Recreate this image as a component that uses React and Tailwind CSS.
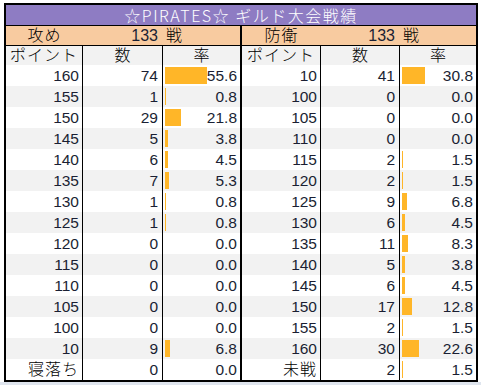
import React from "react";

const FONT = {
  fontFamily: '"Liberation Sans", "Noto Sans CJK JP", sans-serif',
};

const attack = [
  ["160", 74, 55.6],
  ["155", 1, 0.8],
  ["150", 29, 21.8],
  ["145", 5, 3.8],
  ["140", 6, 4.5],
  ["135", 7, 5.3],
  ["130", 1, 0.8],
  ["125", 1, 0.8],
  ["120", 0, 0],
  ["115", 0, 0],
  ["110", 0, 0],
  ["105", 0, 0],
  ["100", 0, 0],
  ["10", 9, 6.8],
  ["寝落ち", 0, 0],
];

const defense = [
  ["10", 41, 30.8],
  ["100", 0, 0],
  ["105", 0, 0],
  ["110", 0, 0],
  ["115", 2, 1.5],
  ["120", 2, 1.5],
  ["125", 9, 6.8],
  ["130", 6, 4.5],
  ["135", 11, 8.3],
  ["140", 5, 3.8],
  ["145", 6, 4.5],
  ["150", 17, 12.8],
  ["155", 2, 1.5],
  ["160", 30, 22.6],
  ["未戦", 2, 1.5],
];

function Half({ label, rows, widths }) {
  const [a, b, c] = widths;
  return (
    <div className="flex flex-col">
      {/* summary row */}
      <div className="flex h-[19px] items-center bg-[#f8cba0] text-black">
        <div className={`${a} text-center text-[16px] font-light tracking-[1px]`}>{label}</div>
        <div className={`${b} pr-[5px] text-right text-[16px] text-[#1a1f33]`}>
          133
        </div>
        <div className={`${c} pl-[3px] text-[16px] font-light`}>戦</div>
      </div>
      <div className="h-px bg-black" />

      {/* header row */}
      <div className="flex h-[19px] items-center bg-[#f2f2f2] text-black text-[16px] font-light leading-none">
        <div className={`${a} h-full flex items-center justify-center border-r border-black tracking-[1px]`}>
          ポイント
        </div>
        <div className={`${b} h-full flex items-center justify-center border-r border-black`}>
          数
        </div>
        <div className={`${c} h-full flex items-center justify-center`}>率</div>
      </div>

      {/* data rows */}
      {rows.map(([pt, n, r], i) => {
        const w = r > 0 ? Math.max(1, Math.round(r * 0.755)) : 0;
        const isText = isNaN(Number(pt));
        return (
          <div
            key={i}
            className={`flex h-[21px] text-[#1a1f33] ${
              i % 2 === 1 ? "bg-[#f2f2f2]" : "bg-white"
            }`}
          >
            <div
              className={`${a} flex items-center justify-end border-r border-black pr-[3px] ${
                isText ? "text-[16px] font-light text-black tracking-[1px]" : "text-[15.5px]"
              }`}
            >
              {pt}
            </div>
            <div
              className={`${b} flex items-center justify-end border-r border-black pr-[4px] text-[15.5px]`}
            >
              {n}
            </div>
            <div className={`${c} flex items-center justify-between pl-[2px] pr-[3px] text-[15.5px]`}>
              <div className="h-[17px] bg-[#ffb628]" style={{ width: w }} />
              <span>{r.toFixed(1)}</span>
            </div>
          </div>
        );
      })}
    </div>
  );
}

export default function App() {
  return (
    <div className="w-[481px] h-[385px] bg-white flex flex-col" style={FONT}>
      <div className="pl-[4px] pt-[3px]">
        <div className="w-[474px] border-2 border-black">
          <div className="h-[20px] bg-[#8e7cc3] flex items-center justify-center text-white text-[16px] font-light tracking-[1.5px] leading-none">
            <span style={{ fontFamily: '"Noto Sans CJK JP", sans-serif' }}>
              ☆PIRATES☆ ギルド大会戦績
            </span>
          </div>
          <div className="h-px bg-black" />
          <div className="flex">
            <Half
              label="攻め"
              rows={attack}
              widths={["w-[77px]", "w-[80px]", "w-[77px]"]}
            />
            <div className="w-[2px] bg-black" />
            <Half
              label="防衛"
              rows={defense}
              widths={["w-[79px]", "w-[79px]", "w-[76px]"]}
            />
          </div>
        </div>
      </div>
      <div className="flex-1 bg-[#dfe5ee]" />
    </div>
  );
}
